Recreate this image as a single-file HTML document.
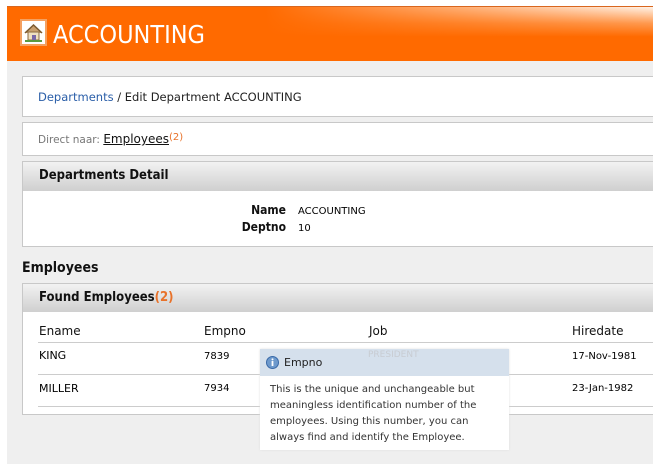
<!DOCTYPE html>
<html><head><meta charset="utf-8"><style>
*{margin:0;padding:0;box-sizing:border-box}
body{width:653px;height:464px;overflow:hidden;background:#fff;font-family:"DejaVu Sans","Liberation Sans",sans-serif;position:relative}
.bg{position:absolute;left:7px;top:6px;right:0;bottom:0;background:#efefef}
.hdr{position:absolute;left:7px;top:6px;right:0;height:55px;background:linear-gradient(90deg,#ff6a00 0%,#ff6a00 40%,rgba(255,106,0,0) 100%),linear-gradient(180deg,#fff3e8 0%,#ff9a50 30%,#ff6a00 55%,#ff6a00 100%);border-top:1px solid #d9661e}
.hdr .t{position:absolute;left:46px;top:13px;color:#fff;font-size:25px;font-family:"DejaVu Sans Condensed","DejaVu Sans",sans-serif}
.ico{position:absolute;left:20px;top:19px;width:27px;height:27px;background:#fff;border:2px solid #f4a060}
.box{position:absolute;left:22px;right:-5px;background:#fff;border:1px solid #c8c8c8}
.ph{background:linear-gradient(#f2f2f2,#cfcfcf);font-weight:bold;font-size:13px;padding-left:16px;color:#111;font-family:"DejaVu Sans Condensed","DejaVu Sans",sans-serif}
.b{font-weight:bold;font-family:"DejaVu Sans Condensed","DejaVu Sans",sans-serif;color:#111}
.s{font-size:11.5px}
.o{color:#e8722a}
</style></head><body>
<div class="bg"></div>
<div class="hdr"><div class="t">ACCOUNTING</div></div>
<div class="ico"><svg width="23" height="23" viewBox="0 0 23 23"><path d="M3 12 L11.5 4 L20 12" fill="#c9a070" stroke="#7a5a30" stroke-width="1.5"/><rect x="6" y="11" width="11" height="8" fill="#f0e0c0" stroke="#8a6a40"/><rect x="10" y="14" width="4" height="5" fill="#7a68a8"/><rect x="3" y="19" width="17" height="2" fill="#5a9a40"/></svg></div>

<div class="box" style="top:76px;height:41px"><div class="s" style="position:absolute;left:15px;top:13px;color:#222"><span style="color:#2a5ea8">Departments</span> / Edit Department ACCOUNTING</div></div>
<div class="box" style="top:122px;height:34px"><div style="position:absolute;left:15px;top:9px;font-size:10.5px;color:#777">Direct naar: <span style="color:#111;text-decoration:underline;font-size:12px">Employees</span><span class="o" style="font-size:10px;vertical-align:top">(2)</span></div></div>
<div class="box" style="top:161px;height:86px"><div class="ph" style="height:29px;line-height:28px">Departments Detail</div>
<div class="b" style="position:absolute;left:200px;top:40px;font-size:12px;text-align:right;width:63px;line-height:17px">Name<br>Deptno</div>
<div style="position:absolute;left:275px;top:41px;font-size:10px;line-height:17px">ACCOUNTING<br>10</div></div>
<div class="b" style="position:absolute;left:22px;top:260px;font-size:14px">Employees</div>
<div class="box" style="top:283px;height:132px"><div class="ph" style="height:28px;line-height:27px">Found Employees<span class="o">(2)</span></div>
<div style="position:absolute;left:15px;right:0;top:58px;border-top:1px solid #ccc"></div>
<div style="position:absolute;left:15px;right:0;top:90px;border-top:1px solid #ccc"></div>
<div style="position:absolute;left:15px;right:0;top:122px;border-top:1px solid #ccc"></div>
<div style="position:absolute;left:16px;top:40px;font-size:12px;color:#111">Ename</div>
<div style="position:absolute;left:181px;top:40px;font-size:12px;color:#111">Empno</div>
<div style="position:absolute;left:346px;top:40px;font-size:12px;color:#111">Job</div>
<div style="position:absolute;left:549px;top:40px;font-size:12px;color:#111">Hiredate</div>
<div style="position:absolute;left:16px;top:65px;font-size:11px">KING</div>
<div style="position:absolute;left:181px;top:67px;font-size:10px">7839</div>
<div style="position:absolute;left:549px;top:67px;font-size:10px">17-Nov-1981</div>
<div style="position:absolute;left:16px;top:98px;font-size:11px">MILLER</div>
<div style="position:absolute;left:181px;top:99px;font-size:10px">7934</div>
<div style="position:absolute;left:549px;top:99px;font-size:10px">23-Jan-1982</div>
</div>
<div style="position:absolute;left:260px;top:349px;width:249px;height:101px;background:#fff;box-shadow:0 0 2px #ddd">
<div style="height:27px;background:#d5e0ec;position:relative"><svg style="position:absolute;left:6px;top:7px" width="13" height="13"><circle cx="6.5" cy="6.5" r="6" fill="#6d99cc" stroke="#3a6aa8"/><rect x="5.6" y="5" width="1.8" height="5" fill="#fff"/><circle cx="6.5" cy="3.4" r="1" fill="#fff"/></svg><span style="position:absolute;left:24px;top:7px;font-size:11px;color:#222">Empno</span><span style="position:absolute;left:108px;top:1px;font-size:9px;color:#c8ccd2">PRESIDENT</span></div>
<div style="padding:6px 10px 0 10px;font-size:10px;line-height:16px;color:#333">This is the unique and unchangeable but meaningless identification number of the employees. Using this number, you can always find and identify the Employee.</div>
</div>
</body></html>
